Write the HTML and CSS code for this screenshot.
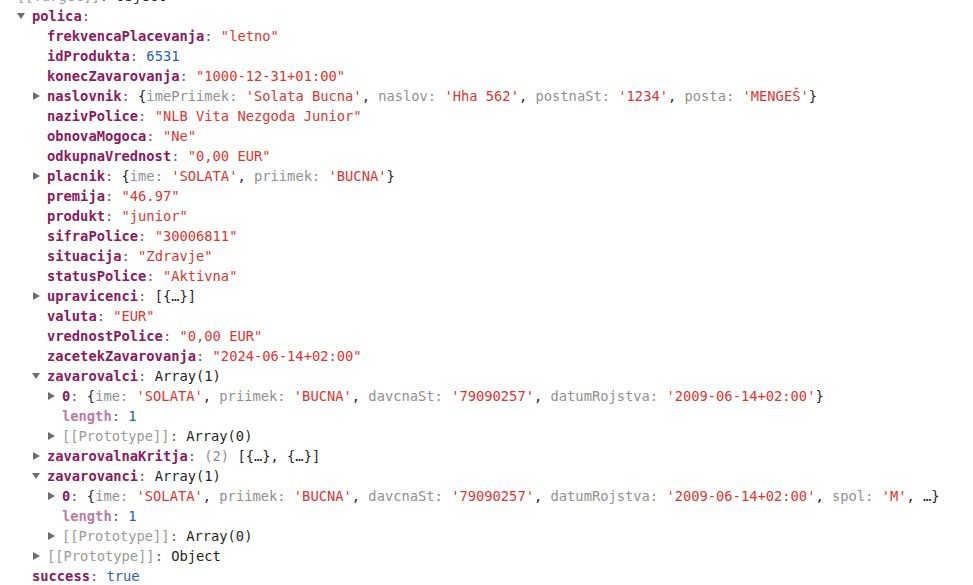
FILE: index.html
```html
<!DOCTYPE html>
<html>
<head>
<meta charset="utf-8">
<link rel="stylesheet" href="styles.css">
</head>
<body>
<div class="console">
  <div class="row"><span class="tog down"></span><span class="internal">[[Target]]</span><span class="sep">: </span><span class="type">Object</span></div>
  <div class="kids">
    <div class="row"><span class="tog down"></span><span class="name">polica</span><span class="sep">:</span></div>
    <div class="kids">
      <div class="row"><span class="tog"></span><span class="name">frekvencaPlacevanja</span><span class="sep">: </span><span class="str">"letno"</span></div>
      <div class="row"><span class="tog"></span><span class="name">idProdukta</span><span class="sep">: </span><span class="num">6531</span></div>
      <div class="row"><span class="tog"></span><span class="name">konecZavarovanja</span><span class="sep">: </span><span class="str">"1000-12-31+01:00"</span></div>
      <div class="row"><span class="tog right"></span><span class="name">naslovnik</span><span class="sep">: </span><span class="pv">{<span class="pk">imePriimek</span><span class="pk">: </span><span class="str">'Solata Bucna'</span>, <span class="pk">naslov: </span><span class="str">'Hha 562'</span>, <span class="pk">postnaSt: </span><span class="str">'1234'</span>, <span class="pk">posta: </span><span class="str">'MENGEŠ'</span>}</span></div>
      <div class="row"><span class="tog"></span><span class="name">nazivPolice</span><span class="sep">: </span><span class="str">"NLB Vita Nezgoda Junior"</span></div>
      <div class="row"><span class="tog"></span><span class="name">obnovaMogoca</span><span class="sep">: </span><span class="str">"Ne"</span></div>
      <div class="row"><span class="tog"></span><span class="name">odkupnaVrednost</span><span class="sep">: </span><span class="str">"0,00 EUR"</span></div>
      <div class="row"><span class="tog right"></span><span class="name">placnik</span><span class="sep">: </span><span class="pv">{<span class="pk">ime: </span><span class="str">'SOLATA'</span>, <span class="pk">priimek: </span><span class="str">'BUCNA'</span>}</span></div>
      <div class="row"><span class="tog"></span><span class="name">premija</span><span class="sep">: </span><span class="str">"46.97"</span></div>
      <div class="row"><span class="tog"></span><span class="name">produkt</span><span class="sep">: </span><span class="str">"junior"</span></div>
      <div class="row"><span class="tog"></span><span class="name">sifraPolice</span><span class="sep">: </span><span class="str">"30006811"</span></div>
      <div class="row"><span class="tog"></span><span class="name">situacija</span><span class="sep">: </span><span class="str">"Zdravje"</span></div>
      <div class="row"><span class="tog"></span><span class="name">statusPolice</span><span class="sep">: </span><span class="str">"Aktivna"</span></div>
      <div class="row"><span class="tog right"></span><span class="name">upravicenci</span><span class="sep">: </span><span class="pv">[{…}]</span></div>
      <div class="row"><span class="tog"></span><span class="name">valuta</span><span class="sep">: </span><span class="str">"EUR"</span></div>
      <div class="row"><span class="tog"></span><span class="name">vrednostPolice</span><span class="sep">: </span><span class="str">"0,00 EUR"</span></div>
      <div class="row"><span class="tog"></span><span class="name">zacetekZavarovanja</span><span class="sep">: </span><span class="str">"2024-06-14+02:00"</span></div>
      <div class="row"><span class="tog down"></span><span class="name">zavarovalci</span><span class="sep">: </span><span class="type">Array(1)</span></div>
      <div class="kids">
        <div class="row"><span class="tog right"></span><span class="name">0</span><span class="sep">: </span><span class="pv">{<span class="pk">ime: </span><span class="str">'SOLATA'</span>, <span class="pk">priimek: </span><span class="str">'BUCNA'</span>, <span class="pk">davcnaSt: </span><span class="str">'79090257'</span>, <span class="pk">datumRojstva: </span><span class="str">'2009-06-14+02:00'</span>}</span></div>
        <div class="row"><span class="tog"></span><span class="name dim">length</span><span class="sep">: </span><span class="num">1</span></div>
        <div class="row"><span class="tog right"></span><span class="internal">[[Prototype]]</span><span class="sep">: </span><span class="type">Array(0)</span></div>
      </div>
      <div class="row"><span class="tog right"></span><span class="name">zavarovalnaKritja</span><span class="sep">: </span><span class="cnt">(2) </span><span class="pv">[{…}, {…}]</span></div>
      <div class="row"><span class="tog down"></span><span class="name">zavarovanci</span><span class="sep">: </span><span class="type">Array(1)</span></div>
      <div class="kids">
        <div class="row"><span class="tog right"></span><span class="name">0</span><span class="sep">: </span><span class="pv">{<span class="pk">ime: </span><span class="str">'SOLATA'</span>, <span class="pk">priimek: </span><span class="str">'BUCNA'</span>, <span class="pk">davcnaSt: </span><span class="str">'79090257'</span>, <span class="pk">datumRojstva: </span><span class="str">'2009-06-14+02:00'</span>, <span class="pk">spol: </span><span class="str">'M'</span>, …}</span></div>
        <div class="row"><span class="tog"></span><span class="name dim">length</span><span class="sep">: </span><span class="num">1</span></div>
        <div class="row"><span class="tog right"></span><span class="internal">[[Prototype]]</span><span class="sep">: </span><span class="type">Array(0)</span></div>
      </div>
      <div class="row"><span class="tog right"></span><span class="internal">[[Prototype]]</span><span class="sep">: </span><span class="type">Object</span></div>
    </div>
    <div class="row"><span class="tog"></span><span class="name">success</span><span class="sep">: </span><span class="num">true</span></div>
  </div>
</div>
</body>
</html>
```
FILE: styles.css
```css
html, body {
  margin: 0;
  padding: 0;
  background: #ffffff;
  overflow: hidden;
}

.console {
  margin-top: -14px;
  padding-left: 2px;
  font-family: "DejaVu Sans Mono", monospace;
  font-size: 13.75px;
  line-height: 20px;
  color: #1f1f1f;
}

.row {
  display: flex;
  align-items: center;
  height: 20px;
  white-space: pre;
}

.kids {
  padding-left: 15px;
}

.tog {
  flex: 0 0 15px;
  height: 20px;
  position: relative;
}

.tog.right::before {
  content: "";
  position: absolute;
  left: 1px;
  top: 6px;
  border-left: 7px solid #6e6e6e;
  border-top: 4px solid transparent;
  border-bottom: 4px solid transparent;
}

.tog.down::before {
  content: "";
  position: absolute;
  left: 0;
  top: 7px;
  border-top: 6px solid #6e6e6e;
  border-left: 4px solid transparent;
  border-right: 4px solid transparent;
}

.name {
  color: #8b1a5e;
  font-weight: bold;
}

.name.dim {
  color: #bd7aa3;
}

.sep {
  color: #5f6368;
}

.str {
  color: #dc362e;
}

.num {
  color: #2c5cb4;
}

.type {
  color: #1f1f1f;
}

.internal {
  color: #9a9a9a;
}

.pv {
  color: #1f1f1f;
}

.pk {
  color: #909090;
}

.cnt {
  color: #909090;
}
```
